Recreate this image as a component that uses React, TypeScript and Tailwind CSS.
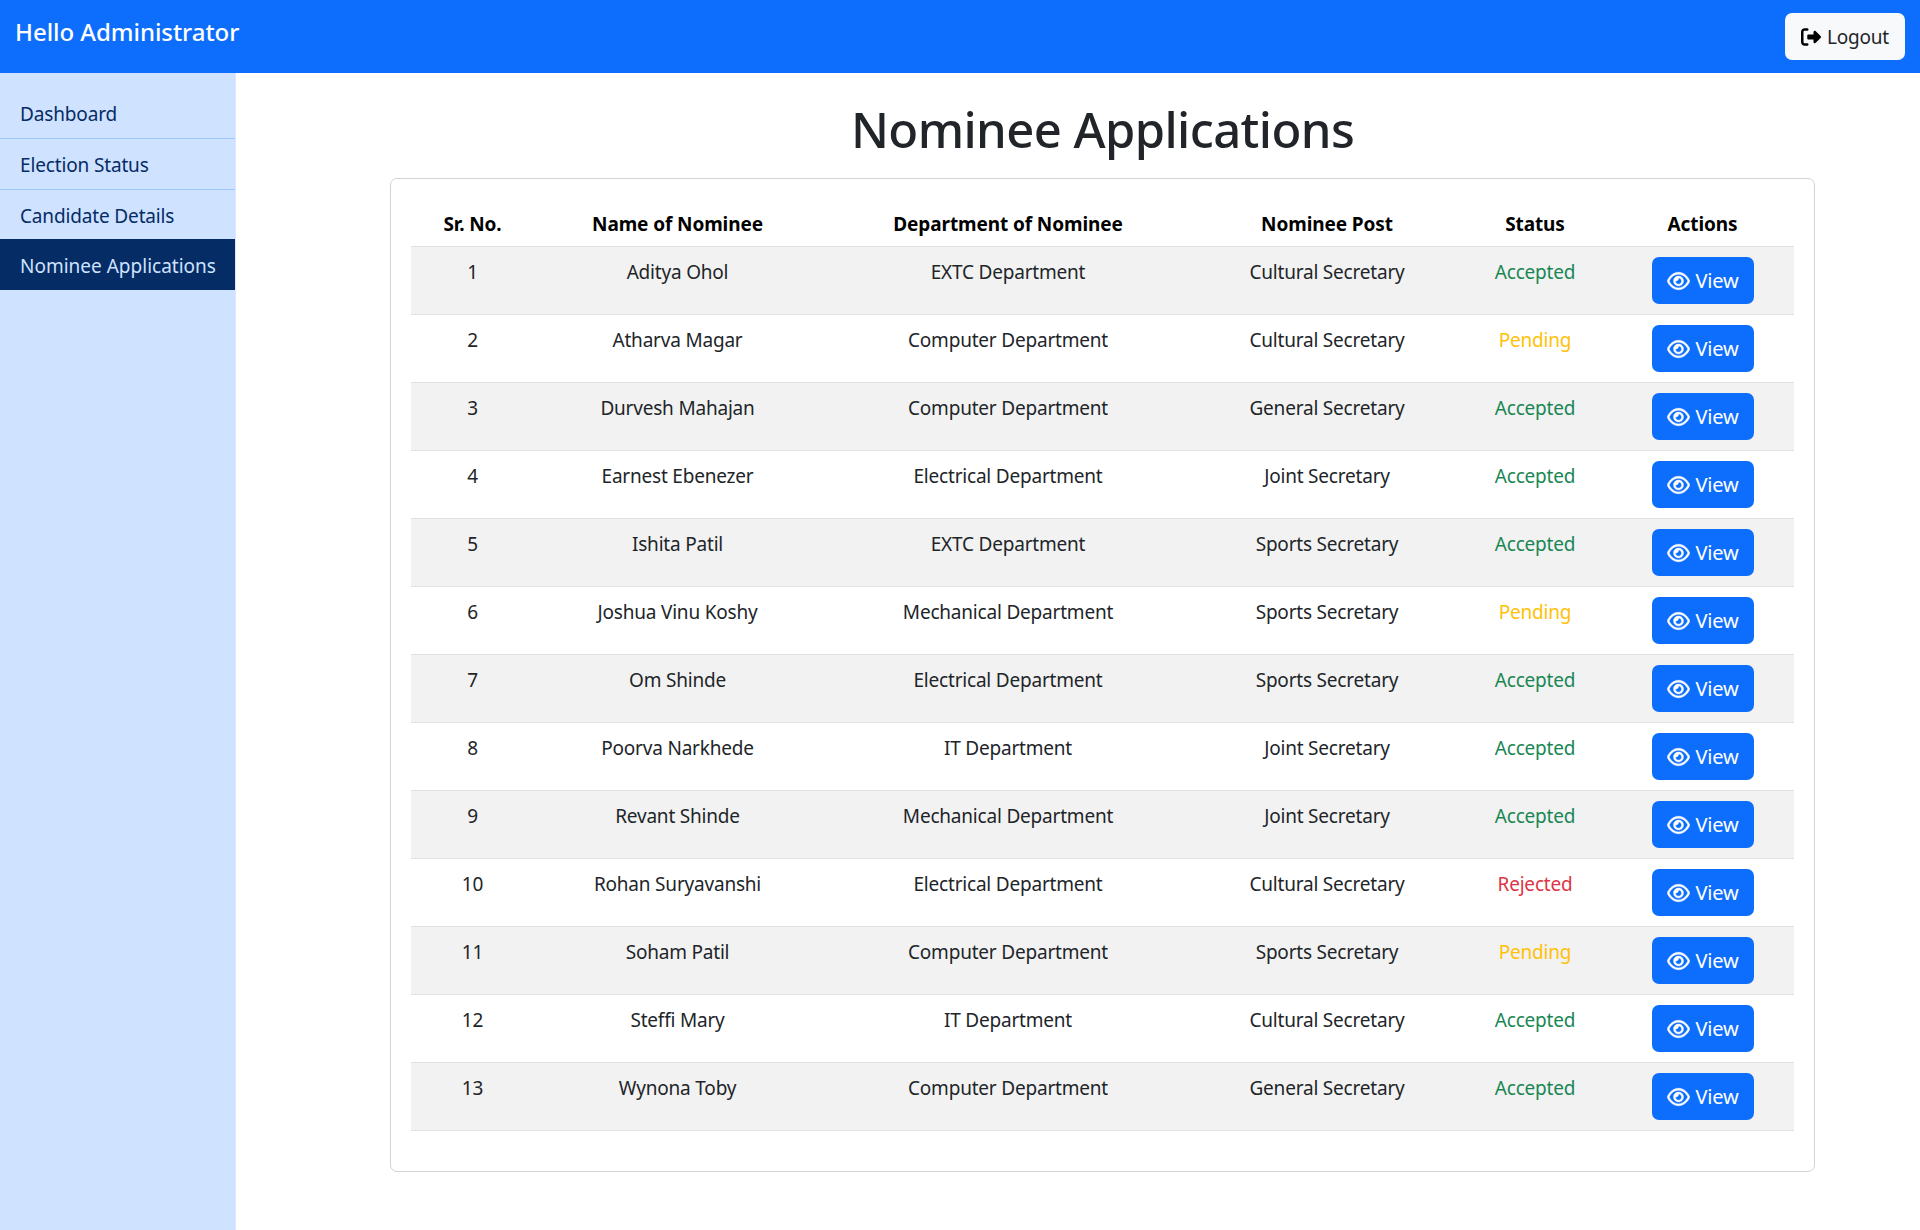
import React from "react";
import { FaRegEye, FaRightFromBracket } from "react-icons/fa6";

interface Nominee {
  name: string;
  dept: string;
  post: string;
  status: "Accepted" | "Pending" | "Rejected";
}

const nominees: Nominee[] = [
  { name: "Aditya Ohol", dept: "EXTC Department", post: "Cultural Secretary", status: "Accepted" },
  { name: "Atharva Magar", dept: "Computer Department", post: "Cultural Secretary", status: "Pending" },
  { name: "Durvesh Mahajan", dept: "Computer Department", post: "General Secretary", status: "Accepted" },
  { name: "Earnest Ebenezer", dept: "Electrical Department", post: "Joint Secretary", status: "Accepted" },
  { name: "Ishita Patil", dept: "EXTC Department", post: "Sports Secretary", status: "Accepted" },
  { name: "Joshua Vinu Koshy", dept: "Mechanical Department", post: "Sports Secretary", status: "Pending" },
  { name: "Om Shinde", dept: "Electrical Department", post: "Sports Secretary", status: "Accepted" },
  { name: "Poorva Narkhede", dept: "IT Department", post: "Joint Secretary", status: "Accepted" },
  { name: "Revant Shinde", dept: "Mechanical Department", post: "Joint Secretary", status: "Accepted" },
  { name: "Rohan Suryavanshi", dept: "Electrical Department", post: "Cultural Secretary", status: "Rejected" },
  { name: "Soham Patil", dept: "Computer Department", post: "Sports Secretary", status: "Pending" },
  { name: "Steffi Mary", dept: "IT Department", post: "Cultural Secretary", status: "Accepted" },
  { name: "Wynona Toby", dept: "Computer Department", post: "General Secretary", status: "Accepted" },
];

const statusColor: Record<Nominee["status"], string> = {
  Accepted: "text-[#198754]",
  Pending: "text-[#ffc107]",
  Rejected: "text-[#dc3545]",
};

const links = ["Dashboard", "Election Status", "Candidate Details"];

const App: React.FC = () => {
  return (
    <div className="min-h-screen bg-white font-['Noto_Sans',sans-serif] text-[19px] leading-[30px] tracking-[-0.2px] text-[#212529]">
      <header className="flex h-[73px] items-start justify-between bg-[#0d6efd] px-[15px]">
        <span className="mt-[16px] text-[24px] font-medium leading-[32px] tracking-[-0.05px] text-white">Hello Administrator</span>
        <button className="mt-[13px] flex h-[47px] w-[120px] items-center justify-center gap-[6px] rounded-[7px] bg-[#f8f9fa]">
          <FaRightFromBracket className="h-[20px] w-[20px] text-black" />
          Logout
        </button>
      </header>
      <div className="flex min-h-[1157px]">
        <aside className="w-[236px] shrink-0 border-r border-[#dbe8fd] bg-[#cfe2ff] pt-[15px] tracking-[-0.15px] text-[#052c65]">
          {links.map((l) => (
            <div key={l} className="flex h-[51px] items-center border-b border-[#9ec5fe] pl-[20px] pt-[2px]">
              {l}
            </div>
          ))}
          <div className="-mt-[2px] flex h-[51px] items-center bg-[#052c65] pl-[20px] pt-[2px] tracking-normal text-[#cfe2ff]">Nominee Applications</div>
        </aside>
        <main className="flex-1 pl-[154px] pr-[105px]">
          <h1 className="mt-[26px] text-center text-[49px] font-medium leading-[60px] tracking-[-0.6px]">Nominee Applications</h1>
          <div className="mt-[19px] rounded-[7px] border border-[#d3d3d3] px-[20px] pb-[40px] pt-[20px]">
            <table className="w-[1383px] table-fixed border-collapse text-center">
              <colgroup>
                <col className="w-[123px]" />
                <col className="w-[287px]" />
                <col className="w-[374px]" />
                <col className="w-[264px]" />
                <col className="w-[152px]" />
                <col className="w-[183px]" />
              </colgroup>
              <thead>
                <tr className="h-[47px] border-b border-[#dee2e6] font-bold tracking-[-0.1px] text-black">
                  <th className="pt-[4px]">Sr. No.</th>
                  <th className="pt-[4px]">Name of Nominee</th>
                  <th className="pt-[4px]">Department of Nominee</th>
                  <th className="pt-[4px]">Nominee Post</th>
                  <th className="pt-[4px]">Status</th>
                  <th className="pt-[4px]">Actions</th>
                </tr>
              </thead>
              <tbody>
                {nominees.map((n, i) => (
                  <tr key={n.name} className={`h-[68px] border-b border-[#dee2e6] ${i % 2 === 0 ? "bg-[#f2f2f2]" : "bg-white"}`}>
                    <td className="pb-[20px] pt-[10px] align-top">{i + 1}</td>
                    <td className="pb-[20px] pt-[10px] align-top">{n.name}</td>
                    <td className="pb-[20px] pt-[10px] align-top">{n.dept}</td>
                    <td className="pb-[20px] pt-[10px] align-top">{n.post}</td>
                    <td className={`pb-[20px] pt-[10px] align-top ${statusColor[n.status]}`}>{n.status}</td>
                    <td className="align-middle">
                      <button className="mx-auto flex h-[47px] w-[102px] items-center justify-center gap-[6px] rounded-[7px] bg-[#0d6efd] pt-[1px] text-[20px] text-white">
                        <FaRegEye className="h-[20px] w-[23px] stroke-current stroke-[12]" />
                        View
                      </button>
                    </td>
                  </tr>
                ))}
              </tbody>
            </table>
          </div>
        </main>
      </div>
    </div>
  );
};

export default App;
